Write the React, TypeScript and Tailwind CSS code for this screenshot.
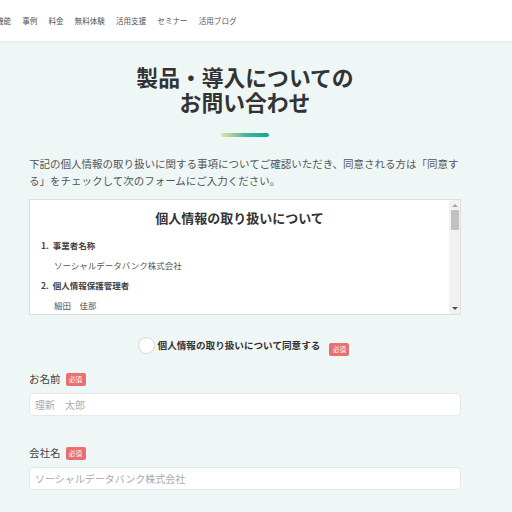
const NAV_ITEMS = ["機能", "事例", "料金", "無料体験", "活用支援", "セミナー", "活用ブログ"];

const FONT = { fontFamily: '"Noto Sans CJK JP", "Noto Sans", sans-serif' };

function Required() {
  return (
    <span className="inline-flex h-[13px] items-center rounded-[2px] bg-[#e87070] px-[3.5px] text-[6.5px] leading-none text-white">
      必須
    </span>
  );
}

function Field({ label, placeholder }: { label: string; placeholder: string }) {
  return (
    <div className="flex flex-col">
      <div className="flex items-center gap-[5px]">
        <span className="text-[10.5px] leading-[14px] text-[#444]">{label}</span>
        <Required />
      </div>
      <div className="mt-[7px] flex h-[23px] items-center rounded-[4px] border border-[#e4e8e8] bg-white px-[5px] text-[10px] text-[#aaa]">
        {placeholder}
      </div>
    </div>
  );
}

export default function App() {
  return (
    <div className="h-[512px] w-[512px] overflow-hidden bg-[#eef7f6]" style={FONT}>
      <header className="flex h-[41px] items-center overflow-hidden bg-white shadow-[0_1px_3px_rgba(0,0,0,0.06)]">
        <nav className="-ml-[4px] flex gap-[11px] pt-[1px] text-[7.6px] text-[#555]">
          {NAV_ITEMS.map((item) => (
            <span key={item} className="whitespace-nowrap">
              {item}
            </span>
          ))}
        </nav>
      </header>

      <main className="ml-[29px] w-[432px]">
        <h1 className="mt-[23px] text-center text-[21.8px] font-bold leading-[25px] text-[#333]">
          <span className="block">製品・導入についての</span>
          <span className="block">お問い合わせ</span>
        </h1>
        <div className="mx-auto mt-[19px] h-[4px] w-[48px] rounded-full bg-gradient-to-r from-[#e6e2a8] via-[#3fb79c] to-[#0aa596]" />

        <p className="mt-[18px] text-[10.5px] leading-[17px] text-[#555]">
          下記の個人情報の取り扱いに関する事項についてご確認いただき、同意される方は「同意する」をチェックして次のフォームにご入力ください。
        </p>

        <div className="mt-[10px] flex h-[116px] border border-[#dedede] bg-white">
          <div className="flex-1 overflow-hidden">
            <h2 className="mt-[8px] text-center text-[13px] font-bold leading-[20px] text-[#333]">
              個人情報の取り扱いについて
            </h2>
            <ol className="mt-[7px] pl-[11px] text-[8.5px] text-[#444]">
              <li className="font-bold leading-[20px]">1.&nbsp;&nbsp;事業者名称</li>
              <li className="pl-[13px] leading-[20px] text-[#555]">ソーシャルデータバンク株式会社</li>
              <li className="font-bold leading-[20px]">2.&nbsp;&nbsp;個人情報保護管理者</li>
              <li className="pl-[13px] leading-[20px] text-[#555]">細田　佳那</li>
            </ol>
          </div>
          <div className="flex w-[11px] flex-col items-center bg-[#f1f1f1]">
            <div className="mt-[4px] h-0 w-0 border-x-[3px] border-b-[3px] border-x-transparent border-b-[#a3a3a3]" />
            <div className="mt-[3px] h-[20px] w-[8px] bg-[#c1c1c1]" />
            <div className="flex-1" />
            <div className="mb-[4px] h-0 w-0 border-x-[3px] border-t-[3px] border-x-transparent border-t-[#505050]" />
          </div>
        </div>

        <label className="mt-[18px] flex items-center justify-center gap-[3px] pr-[3px]">
          <span className="h-[17px] w-[17px] rounded-full border border-[#d6d6d6] bg-white" />
          <span className="text-[9.6px] font-bold text-[#333]">個人情報の取り扱いについて同意する</span>
          <span className="ml-[6px]">
            <Required />
          </span>
        </label>

        <div className="mt-[15px] flex flex-col gap-[30px]">
          <Field label="お名前" placeholder="理新　太郎" />
          <Field label="会社名" placeholder="ソーシャルデータバンク株式会社" />
        </div>
      </main>
    </div>
  );
}
